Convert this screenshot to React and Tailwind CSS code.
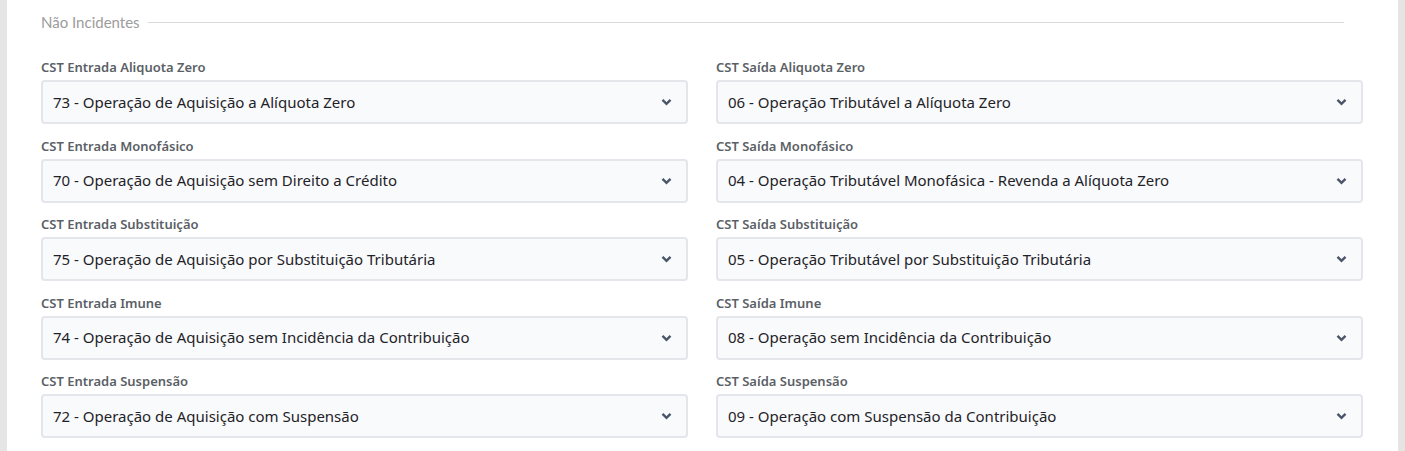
import React from 'react';

const rows = [
  {
    left: { label: 'CST Entrada Aliquota Zero', value: '73 - Operação de Aquisição a Alíquota Zero' },
    right: { label: 'CST Saída Aliquota Zero', value: '06 - Operação Tributável a Alíquota Zero' },
  },
  {
    left: { label: 'CST Entrada Monofásico', value: '70 - Operação de Aquisição sem Direito a Crédito' },
    right: { label: 'CST Saída Monofásico', value: '04 - Operação Tributável Monofásica - Revenda a Alíquota Zero' },
  },
  {
    left: { label: 'CST Entrada Substituição', value: '75 - Operação de Aquisição por Substituição Tributária' },
    right: { label: 'CST Saída Substituição', value: '05 - Operação Tributável por Substituição Tributária' },
  },
  {
    left: { label: 'CST Entrada Imune', value: '74 - Operação de Aquisição sem Incidência da Contribuição' },
    right: { label: 'CST Saída Imune', value: '08 - Operação sem Incidência da Contribuição' },
  },
  {
    left: { label: 'CST Entrada Suspensão', value: '72 - Operação de Aquisição com Suspensão' },
    right: { label: 'CST Saída Suspensão', value: '09 - Operação com Suspensão da Contribuição' },
  },
];

const Field = ({ label, value }) => (
  <div className="flex flex-col">
    <label className="text-[13px] font-semibold text-[#5b5f66] leading-[18px] h-[19px]">{label}</label>
    <div className="mt-[3px] h-[44px] flex items-center justify-between rounded-[4px] border-2 border-[#e4e6ec] bg-[#f9fafc] pl-[10px] pr-[14px]">
      <span className="text-[15px] text-[#1f2328]">{value}</span>
      <svg width="11" height="8" viewBox="0 0 11 8" fill="none">
        <path d="M1.5 1.8 L5.5 5.8 L9.5 1.8" stroke="#4a5568" strokeWidth="2.4" />
      </svg>
    </div>
  </div>
);

const App = () => {
  return (
    <div className="w-[1405px] h-[451px] bg-[#e5e5e5] flex" style={{ fontFamily: '"Noto Sans", "Open Sans", sans-serif' }}>
      <div className="ml-[7px] w-[1391px] h-full bg-white pl-[34px] pr-[35px]">
        <div className="flex items-center h-[42px] pt-[2px]">
          <span className="text-[15px] text-[#9c9c9c]" style={{ fontFamily: 'Lato, "Noto Sans", sans-serif' }}>Não Incidentes</span>
          <div className="ml-[8px] mr-[19px] flex-1 h-px bg-[#d9d9d9]" />
        </div>
        <div className="mt-[16px] grid grid-cols-2 gap-x-[28px] gap-y-[12.5px]">
          {rows.map((r, i) => (
            <React.Fragment key={i}>
              <Field {...r.left} />
              <Field {...r.right} />
            </React.Fragment>
          ))}
        </div>
      </div>
    </div>
  );
};

export default App;
